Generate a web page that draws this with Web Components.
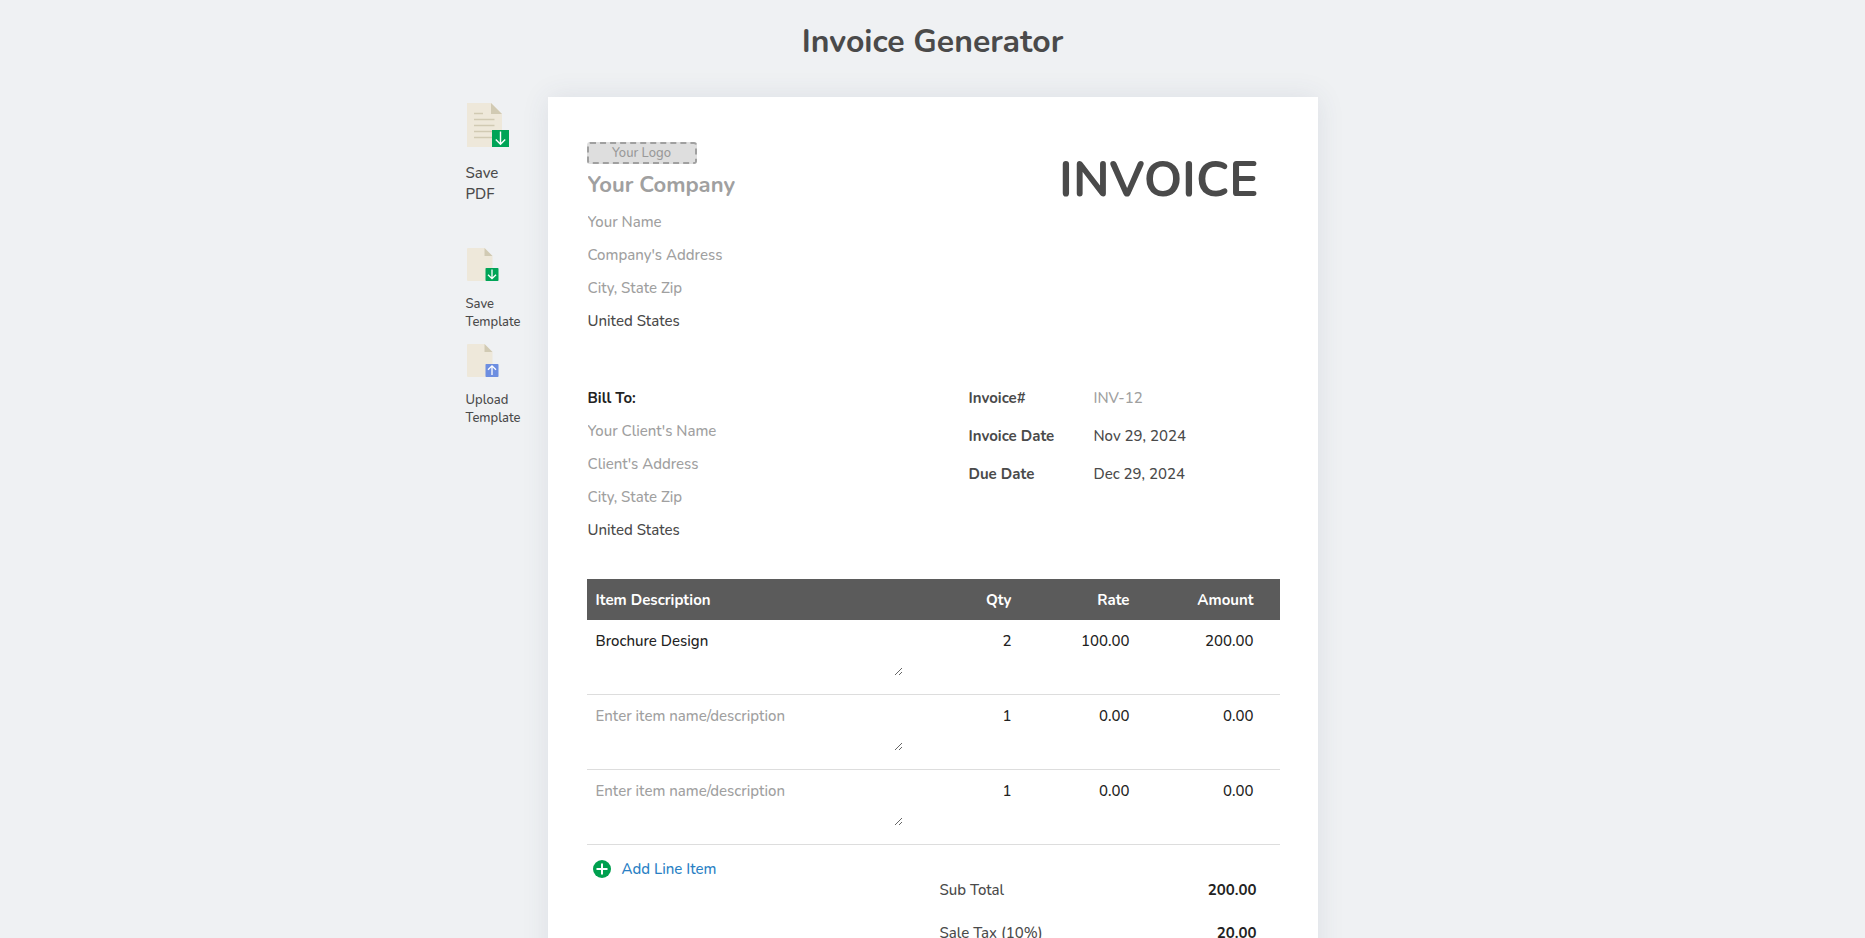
<!DOCTYPE html>
<html lang="en">
<head>
<meta charset="utf-8">
<title>Invoice Generator</title>
<style>
  html { scrollbar-width: none; }
  body {
    margin: 0;
    background: #eff1f3;
    color: #4a4a4a;
    font-family: Nunito, Lato, "Noto Sans", sans-serif;
    font-size: 15px;
    font-weight: 500;
    line-height: 20px;
  }
</style>
</head>
<body>
<invoice-app></invoice-app>
<script>
const FIELD_CSS = `
  *, *::before, *::after { box-sizing: border-box; }
  input, select, textarea, button {
    font: inherit; color: inherit; background: none; border: 0; margin: 0; padding: 0;
    outline: 0; border-radius: 0; letter-spacing: inherit;
  }
  ::placeholder { color: #a0a0a0; opacity: 1; }
`;

function define(name, html, setup) {
  customElements.define(name, class extends HTMLElement {
    constructor() {
      super();
      const t = document.createElement('template');
      t.innerHTML = html;
      this.attachShadow({ mode: 'open' }).append(t.content.cloneNode(true));
    }
    connectedCallback() { if (setup) setup(this, this.shadowRoot); }
  });
}

/* Document icon with a badge; kind = pdf | save | upload */
define('doc-icon', `
  <style>
    :host { display: block; }
    svg { display: block; }
  </style>
  <div id="box"></div>
`, (el, root) => {
  const kind = el.getAttribute('kind');
  const box = root.getElementById('box');
  if (kind === 'pdf') {
    box.innerHTML = `<svg width="42" height="44" viewBox="0 0 42 44" aria-hidden="true">
      <path d="M0 0h24l11 11v33H0z" fill="#eee8da"/>
      <path d="M24 0l11 11H24z" fill="#d1cab3"/>
      <path d="M7 10.500h9M7 16.500h20.500M7 22.500h20.500M7 28.500h20.500M7 34.500h20.500" stroke="#d1cab3" stroke-width="1.300"/>
      <path d="M25 27h17v17H25z" fill="#00a457"/>
      <path d="M33.500 28.500v12.500M28.800 36.500l4.700 4.700 4.700-4.700" stroke="#fff" stroke-width="1.400" fill="none"/></svg>`;
  } else {
    const up = kind === 'upload';
    const arrow = up ? 'M25 31V22M21 25.800l4-4 4 4' : 'M25 21.500v9M21 26.700l4 4 4-4';
    box.innerHTML = `<svg width="32" height="33" viewBox="0 0 32 33" aria-hidden="true">
      <path d="M1 0h16.500l8 8v25H1a1 1 0 0 1-1-1V1a1 1 0 0 1 1-1z" fill="#eee8da"/>
      <path d="M17.500 0l8 8h-8z" fill="#d1cab3"/>
      <rect x="18.500" y="20" width="13" height="13" rx=".8" fill="${up ? '#6d8ee0' : '#00a457'}"/>
      <path d="${arrow}" stroke="#fff" stroke-width="1.300" fill="none"/></svg>`;
  }
});

define('side-action', `
  <style>
    ${FIELD_CSS}
    :host { display: block; font-size: 13px; line-height: 18px; }
    :host([large]) { font-size: 15px; line-height: 21px; }
    button { display: flex; flex-direction: column; gap: 14px; align-items: flex-start; text-align: left; cursor: pointer; width: 64px; }
    :host([large]) button { gap: 16px; }
    doc-icon { padding-left: 1px; }
    :host([large]) span { width: 48px; }
  </style>
  <button type="button"><span><slot></slot></span></button>
`, (el, root) => {
  const icon = document.createElement('doc-icon');
  icon.setAttribute('kind', el.getAttribute('kind'));
  root.querySelector('button').prepend(icon);
});

/* Borderless one-line field */
define('text-line', `
  <style>
    ${FIELD_CSS}
    :host { display: block; }
    input { display: block; width: 100%; height: var(--line, 33px); }
  </style>
  <input type="text">
`, (el, root) => {
  const i = root.querySelector('input');
  i.placeholder = el.getAttribute('placeholder') || '';
  i.value = el.getAttribute('value') || '';
  i.setAttribute('aria-label', el.getAttribute('label') || i.placeholder);
});

define('country-select', `
  <style>
    ${FIELD_CSS}
    :host { display: block; }
    select { display: block; appearance: none; width: 100%; height: 33px; }
  </style>
  <select aria-label="Country"><option>United States</option></select>
`);

define('logo-drop', `
  <style>
    ${FIELD_CSS}
    :host { display: block; }
    button {
      display: block; width: 110px; height: 22px; border: 2px dashed #a0a0a0; border-radius: 3px;
      background: #dedede; color: #999; font-size: 13px; line-height: 18px; cursor: pointer;
    }
  </style>
  <button type="button">Your Logo</button>
`);

define('company-block', `
  <style>
    :host { display: block; }
    .name { --line: 41px; font-size: 22px; font-weight: 700; }
    text-line, country-select { padding-left: 1px; }
  </style>
  <logo-drop></logo-drop>
  <text-line class="name" placeholder="Your Company"></text-line>
  <text-line placeholder="Your Name"></text-line>
  <text-line placeholder="Company's Address"></text-line>
  <text-line placeholder="City, State Zip"></text-line>
  <country-select></country-select>
`);

define('client-block', `
  <style>
    ${FIELD_CSS}
    :host { display: block; padding-left: 1px; }
    h3 { margin: 0; font-size: 15px; line-height: 32px; font-weight: 700; color: #222; }
  </style>
  <h3>Bill To:</h3>
  <text-line placeholder="Your Client's Name"></text-line>
  <text-line placeholder="Client's Address"></text-line>
  <text-line placeholder="City, State Zip"></text-line>
  <country-select></country-select>
`);

define('invoice-meta', `
  <style>
    ${FIELD_CSS}
    :host { display: grid; grid-template-columns: 125px 1fr; row-gap: 6px; align-content: start; }
    label { font-weight: 700; line-height: 32px; }
    input { height: 32px; width: 100%; }
  </style>
  <label for="no">Invoice#</label><input id="no" placeholder="INV-12">
  <label for="date">Invoice Date</label><input id="date" value="Nov 29, 2024">
  <label for="due">Due Date</label><input id="due" value="Dec 29, 2024">
`);

define('item-table', `
  <style>
    ${FIELD_CSS}
    :host { display: block; color: #222; }
    table { width: 100%; table-layout: fixed; border-collapse: separate; border-spacing: 0; }
    th { height: 41px; padding: 0; background: #5b5b5b; color: #fff; font-weight: 700; text-align: right; }
    th:first-child { text-align: left; padding-left: 9px; }
    td { height: 75px; padding: 10px 0 0; border-bottom: 1px solid #ddd; vertical-align: top; text-align: right; }
    td:first-child { padding-left: 9px; }
    th:last-child, td:last-child { padding-right: 26px; }
    .qty { width: 100px; } .rate { width: 118px; } .amount { width: 150px; }
    textarea { display: block; width: 307px; height: 46px; line-height: 22px; resize: vertical; overflow: hidden; }
    td input { width: 100%; height: 22px; text-align: right; }
    output { display: block; line-height: 22px; }
  </style>
  <table>
    <thead><tr>
      <th scope="col">Item Description</th><th scope="col" class="qty">Qty</th>
      <th scope="col" class="rate">Rate</th><th scope="col" class="amount">Amount</th>
    </tr></thead>
    <tbody></tbody>
  </table>
`, (el, root) => {
  const body = root.querySelector('tbody');
  if (body.children.length) return;
  for (const [text, qty, rate, amount] of [
    ['Brochure Design', '2', '100.00', '200.00'],
    ['', '1', '0.00', '0.00'],
    ['', '1', '0.00', '0.00'],
  ]) {
    body.insertAdjacentHTML('beforeend', `<tr>
      <td><textarea aria-label="Item description" placeholder="Enter item name/description">${text}</textarea></td>
      <td><input aria-label="Qty" value="${qty}"></td>
      <td><input aria-label="Rate" value="${rate}"></td>
      <td><output>${amount}</output></td></tr>`);
  }
});

define('add-line', `
  <style>
    ${FIELD_CSS}
    :host { display: block; }
    button { display: flex; align-items: center; gap: 11px; height: 20px; color: #2a7fc4; cursor: pointer; }
    svg { display: block; }
  </style>
  <button type="button">
    <svg width="18" height="18" viewBox="0 0 18 18" aria-hidden="true"><circle cx="9" cy="9" r="9" fill="#00a04f"/><path d="M9 3.500v11M3.500 9h11" stroke="#fff" stroke-width="2"/></svg>
    Add Line Item
  </button>
`);

define('invoice-totals', `
  <style>
    ${FIELD_CSS}
    :host { display: block; }
    dl { margin: 0; display: grid; grid-template-columns: 1fr auto; row-gap: 23px; }
    dd { margin: 0; font-weight: 700; color: #222; text-align: right; }
  </style>
  <dl>
    <dt>Sub Total</dt><dd>200.00</dd>
    <dt>Sale Tax (10%)</dt><dd>20.00</dd>
  </dl>
`);

define('invoice-paper', `
  <style>
    ${FIELD_CSS}
    :host { display: block; background: #fff; padding: 45px 38px 80px 39px; box-shadow: 0 0 26px rgba(60, 70, 110, .1); }
    .top, .parties { display: grid; grid-template-columns: 1fr 311px; }
    h2 { margin: 0; padding: 8px 21px 0 0; font-size: 49px; line-height: 60px; font-weight: 700; text-align: right; }
    .parties { margin-top: 45px; }
    item-table { margin-top: 33px; }
    .foot { display: grid; grid-template-columns: 1fr 317px; padding-right: 23px; }
    add-line { padding: 14px 0 0 6px; }
    invoice-totals { padding-top: 35px; }
  </style>
  <div class="top"><company-block></company-block><h2>INVOICE</h2></div>
  <div class="parties"><client-block></client-block><invoice-meta></invoice-meta></div>
  <item-table></item-table>
  <div class="foot"><add-line></add-line><invoice-totals></invoice-totals></div>
`);

define('invoice-app', `
  <style>
    :host { display: block; }
    h1 { margin: 0; padding: 22px 0 35px; font-size: 32px; line-height: 40px; font-weight: 700; text-align: center; }
    main { display: grid; grid-template-columns: 1fr minmax(auto, 770px) 1fr; }
    nav { justify-self: end; width: 82px; padding-top: 6px; display: flex; flex-direction: column; }
    .pdf { margin-bottom: 43px; }
    .save { margin-bottom: 13px; }
  </style>
  <h1>Invoice Generator</h1>
  <main>
    <nav aria-label="Invoice actions">
      <side-action class="pdf" kind="pdf" large>Save PDF</side-action>
      <side-action class="save" kind="save">Save Template</side-action>
      <side-action kind="upload">Upload Template</side-action>
    </nav>
    <invoice-paper></invoice-paper>
  </main>
`);
</script>
</body>
</html>
